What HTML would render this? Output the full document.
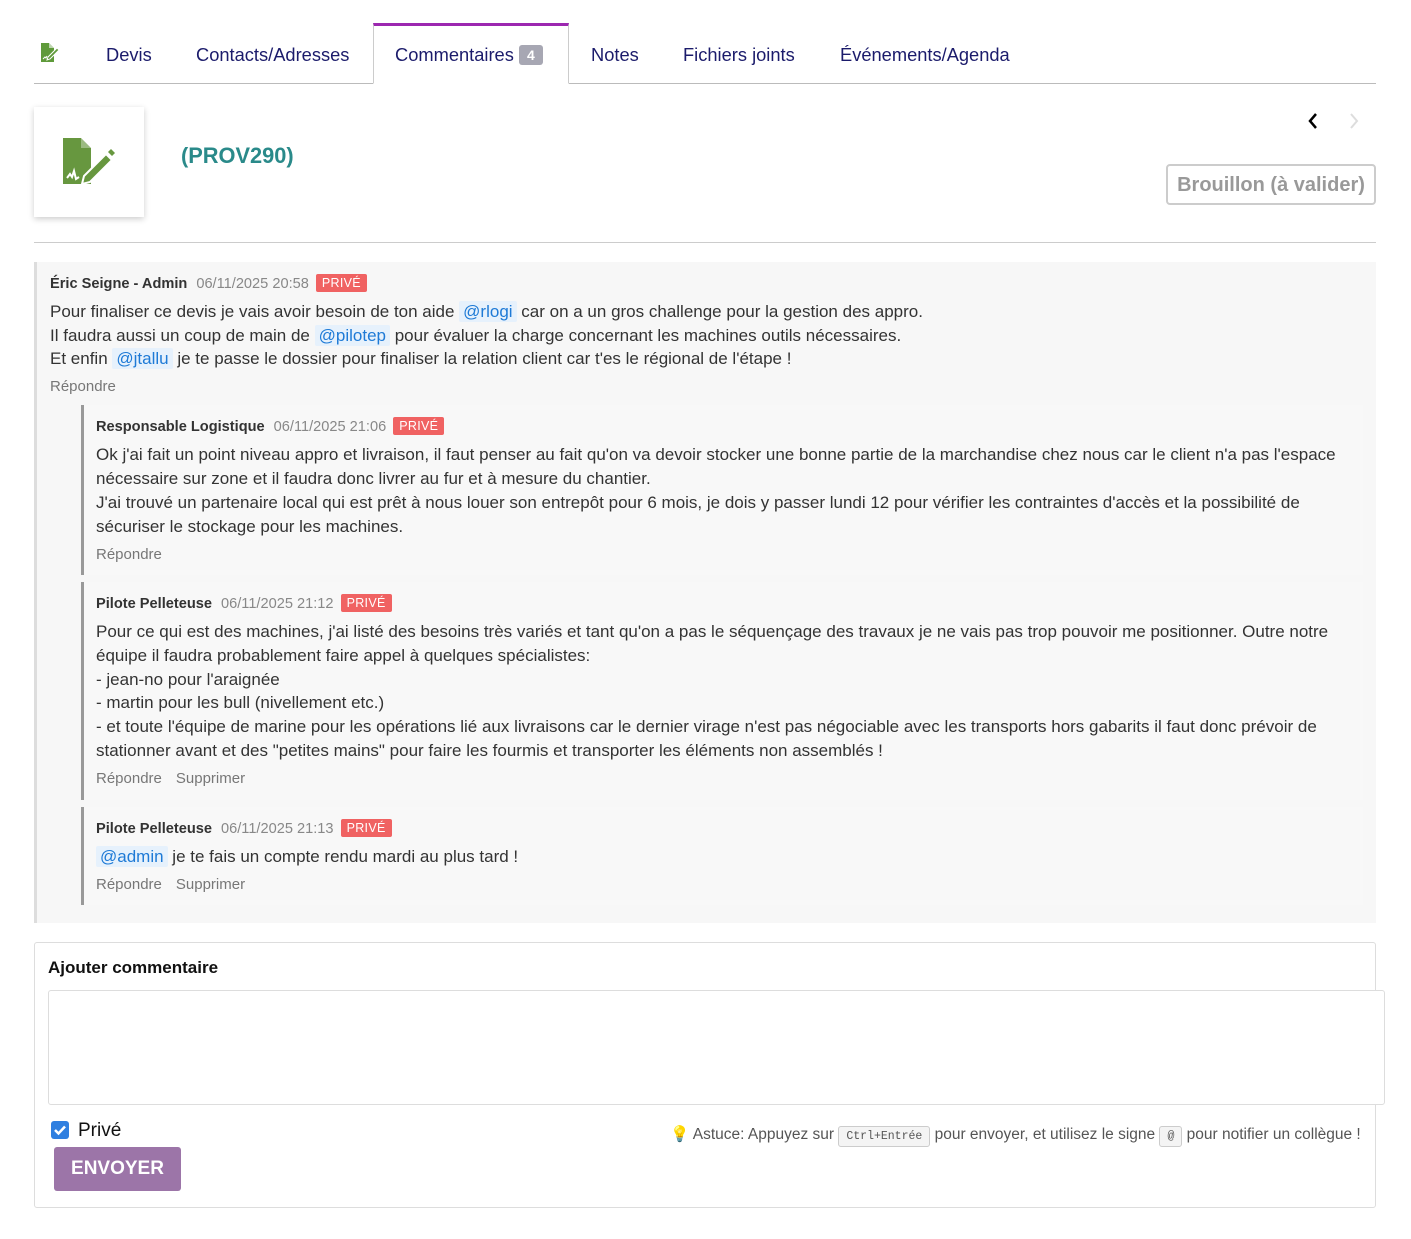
<!DOCTYPE html>
<html><head><meta charset="utf-8"><style>
*{box-sizing:border-box;margin:0;padding:0}
body{width:1411px;height:1239px;background:#fff;font-family:"Liberation Sans",Arial,sans-serif;color:#333;position:relative;overflow:hidden}
.a{position:absolute}
.tab{position:absolute;top:44px;font-size:18.3px;color:#1b1b6b;white-space:nowrap}
.hd{font-size:14.6px;white-space:nowrap}
.hd b{color:#333}
.hd .d{color:#888;margin-left:9px}
.pv{display:inline-block;background:#f06262;color:#fff;font-size:12.5px;padding:2px 6px;border-radius:2px;margin-left:3px;letter-spacing:.3px;vertical-align:1px}
.tx{font-size:17px;line-height:24px;color:#333}
.m{background:#e6f1fc;color:#1e7ad6;padding:1px 4px;border-radius:2px}
.ac{font-size:15px;color:#777}
.ac span{margin-right:14px}
.rep{position:absolute;left:81px;width:1282px;border-left:3px solid #999;background:#f8f8f8;padding-left:12px}
kbd{font-family:"Liberation Mono",monospace;font-size:11.5px;border:1px solid #ccc;background:#f4f4f4;border-radius:3px;padding:3px 7px;color:#555}
</style></head><body>
<div class="a" style="left:34px;top:83px;width:1342px;height:1px;background:#bbb"></div>
<div class="a" style="left:373px;top:23px;width:196px;height:61px;border:1px solid #ccc;border-top:3px solid #9c27b0;border-bottom:1px solid #fff;background:#fff"></div>
<svg class="a" style="left:40px;top:42px" width="24" height="22" viewBox="0 0 24 22"><path d="M1 1h8l5 5v14H1z" fill="#5f9a3a"/><path d="M9 1v5h5" fill="#fff" opacity=".6"/><path d="M8 15l9-9 2 2-9 9-3 1z" fill="#5f9a3a" stroke="#fff" stroke-width="1"/><path d="M3 17l2-2 1 1 1-2" stroke="#fff" fill="none"/></svg>
<div class="tab" style="left:106px">Devis</div>
<div class="tab" style="left:196px">Contacts/Adresses</div>
<div class="tab" style="left:395px">Commentaires <span style="display:inline-block;background:#a7a7b3;color:#fff;font-size:14px;font-weight:bold;padding:2px 8px;border-radius:3px;vertical-align:1px">4</span></div>
<div class="tab" style="left:591px">Notes</div>
<div class="tab" style="left:683px">Fichiers joints</div>
<div class="tab" style="left:840px">Événements/Agenda</div>
<div class="a" style="left:34px;top:107px;width:110px;height:110px;background:#fff;box-shadow:0 2px 6px rgba(0,0,0,.2)"></div>
<svg class="a" style="left:60px;top:136px" width="60" height="52" viewBox="0 0 60 52"><path d="M3 2h18l10 10v36H3z" fill="#67973f"/><path d="M21 2v10h10" fill="#fff" opacity=".35"/><path d="M24 40l22-22 6 6-22 22-8 2z" fill="#67973f" stroke="#fff" stroke-width="2"/><path d="M48 16l3-3 4 4-3 3z" fill="#67973f"/><path d="M7 42l3-4 2 3 2-6 2 8 3-2" stroke="#fff" stroke-width="2" fill="none"/></svg>
<div class="a" style="left:181px;top:143px;font-size:21.8px;font-weight:bold;color:#2a8a8a">(PROV290)</div>
<svg class="a" style="left:1303px;top:110px" width="60" height="22"><path d="M13 4l-6 7 6 7" stroke="#000" stroke-width="2.5" fill="none"/><path d="M48 4l6 7-6 7" stroke="#ddd" stroke-width="2" fill="none"/></svg>
<div class="a" style="left:1166px;top:164px;width:210px;height:41px;border:2px solid #ccc;border-radius:4px;font-size:20px;font-weight:bold;color:#999;text-align:center;line-height:39px">Brouillon (à valider)</div>
<div class="a" style="left:34px;top:242px;width:1342px;height:1px;background:#ccc"></div>
<div class="a" style="left:34px;top:262px;width:1342px;height:661px;background:#f7f7f7;border-left:3px solid #ddd"></div>
<div class="a" style="left:50px;top:274px"><div class="hd"><b>Éric Seigne - Admin</b><span class="d">06/11/2025 20:58</span> <span class="pv">PRIVÉ</span></div>
<div class="tx" style="margin-top:8px;line-height:23.5px">Pour finaliser ce devis je vais avoir besoin de ton aide <span class="m">@rlogi</span> car on a un gros challenge pour la gestion des appro.<br>Il faudra aussi un coup de main de <span class="m">@pilotep</span> pour évaluer la charge concernant les machines outils nécessaires.<br>Et enfin <span class="m">@jtallu</span> je te passe le dossier pour finaliser la relation client car t'es le régional de l'étape !</div>
<div class="ac" style="margin-top:7px"><span>Répondre</span></div></div>

<div class="rep" style="top:405px;height:170px;padding-top:12px"><div class="hd"><b>Responsable Logistique</b><span class="d">06/11/2025 21:06</span> <span class="pv">PRIVÉ</span></div>
<div class="tx" style="margin-top:8px">Ok j'ai fait un point niveau appro et livraison, il faut penser au fait qu'on va devoir stocker une bonne partie de la marchandise chez nous car le client n'a pas l'espace nécessaire sur zone et il faudra donc livrer au fur et à mesure du chantier.<br>J'ai trouvé un partenaire local qui est prêt à nous louer son entrepôt pour 6 mois, je dois y passer lundi 12 pour vérifier les contraintes d'accès et la possibilité de sécuriser le stockage pour les machines.</div>
<div class="ac" style="margin-top:7px"><span>Répondre</span></div></div>

<div class="rep" style="top:582px;height:218px;padding-top:12px"><div class="hd"><b>Pilote Pelleteuse</b><span class="d">06/11/2025 21:12</span> <span class="pv">PRIVÉ</span></div>
<div class="tx" style="margin-top:8px;line-height:23.8px">Pour ce qui est des machines, j'ai listé des besoins très variés et tant qu'on a pas le séquençage des travaux je ne vais pas trop pouvoir me positionner. Outre notre équipe il faudra probablement faire appel à quelques spécialistes:<br>- jean-no pour l'araignée<br>- martin pour les bull (nivellement etc.)<br>- et toute l'équipe de marine pour les opérations lié aux livraisons car le dernier virage n'est pas négociable avec les transports hors gabarits il faut donc prévoir de stationner avant et des "petites mains" pour faire les fourmis et transporter les éléments non assemblés !</div>
<div class="ac" style="margin-top:7px"><span>Répondre</span><span>Supprimer</span></div></div>

<div class="rep" style="top:807px;height:98px;padding-top:12px"><div class="hd"><b>Pilote Pelleteuse</b><span class="d">06/11/2025 21:13</span> <span class="pv">PRIVÉ</span></div>
<div class="tx" style="margin-top:8px"><span class="m">@admin</span> je te fais un compte rendu mardi au plus tard !</div>
<div class="ac" style="margin-top:7px"><span>Répondre</span><span>Supprimer</span></div></div>
<div class="a" style="left:34px;top:942px;width:1342px;height:266px;border:1px solid #ddd;border-radius:3px"></div>
<div class="a" style="left:48px;top:958px;font-size:17px;font-weight:bold;color:#111">Ajouter commentaire</div>
<div class="a" style="left:48px;top:990px;width:1337px;height:115px;border:1px solid #ddd;border-radius:3px;background:#fff"></div>
<div class="a" style="left:51px;top:1121px;width:18px;height:18px;background:#2f7fe0;border-radius:3px"><svg width="18" height="18"><path d="M4 9l3.5 3.5L14 5.5" stroke="#fff" stroke-width="2.5" fill="none"/></svg></div>
<div class="a" style="left:78px;top:1120px;font-size:19px;color:#111">Privé</div>
<div class="a" style="left:54px;top:1147px;width:127px;height:44px;background:#9c75a8;border-radius:3px;color:#fff;font-size:19px;font-weight:bold;text-align:center;line-height:44px">ENVOYER</div>
<div class="a" style="left:670px;top:1125px;font-size:15.5px;color:#555;white-space:nowrap">💡 Astuce: Appuyez sur <kbd>Ctrl+Entrée</kbd> pour envoyer, et utilisez le signe <kbd>@</kbd> pour notifier un collègue !</div>
</body></html>
